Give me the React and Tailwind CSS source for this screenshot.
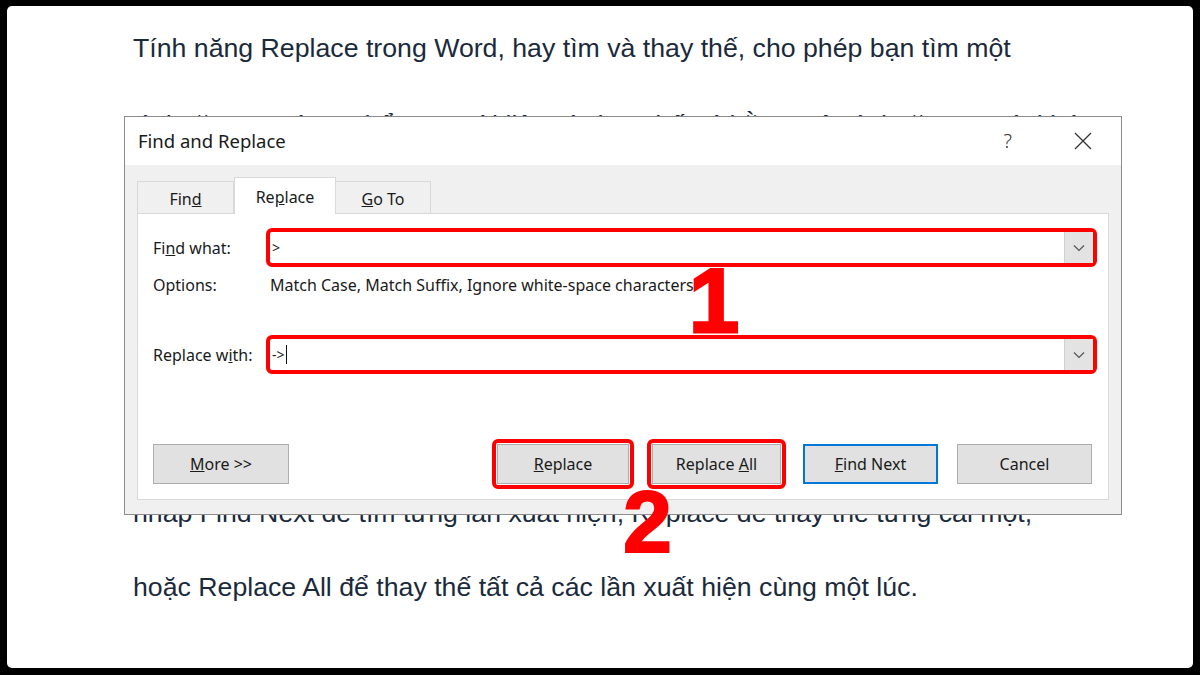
import React from "react";

function Chevron() {
  return (
    <svg width="12" height="8" viewBox="0 0 12 8" className="block">
      <polyline points="1,1.5 6,6.5 11,1.5" fill="none" stroke="#555" strokeWidth="1.2" />
    </svg>
  );
}

function Field({ value, cursor }) {
  return (
    <div className="h-[39px] border-4 border-[#ff0000] rounded-[6px] flex bg-white">
      <div className="flex-1 flex items-center pl-[2px] text-[14px] text-[#222]">
        <span>{value}</span>
        {cursor && <span className="inline-block w-px h-[19px] bg-[#111] ml-[1px]" />}
      </div>
      <div className="w-[29px] bg-[#e3e3e3] border-l border-[#d0d0d0] flex items-center justify-center">
        <Chevron />
      </div>
    </div>
  );
}

function Btn({ children, blue, w }) {
  return (
    <div
      className={
        "h-[40px] shrink-0 flex items-center justify-center bg-[#e1e1e1] text-[16px] text-[#1a1a1a] " +
        (blue ? "border-2 border-[#0078d7]" : "border border-[#adadad]")
      }
      style={{ width: w }}
    >
      {children}
    </div>
  );
}

function RedBtn({ children, w }) {
  return (
    <div className="shrink-0 border-4 border-[#ff0000] rounded-[6px] p-px">
      <div
        className="h-[40px] flex items-center justify-center bg-[#e1e1e1] border border-[#adadad]"
        style={{ width: w }}
      >
        {children}
      </div>
    </div>
  );
}

export default function App() {
  const body = { fontFamily: '"Liberation Sans", Arial, sans-serif' };
  const ui = { fontFamily: '"Noto Sans", "Open Sans", sans-serif' };
  return (
    <div className="w-[1200px] h-[675px] bg-black pt-[6px] px-[7px] pb-[7px]">
      <div className="relative w-full h-full bg-white rounded-[5px] overflow-hidden">
        <div className="pt-[5px] pl-[126px] leading-[74px] text-[26.7px] text-[#1b2a3b] whitespace-nowrap" style={body}>
          <div>Tính năng Replace trong Word, hay tìm và thay thế, cho phép bạn tìm một</div>
          <div className="mt-[3px]">từ hoặc cụm từ cụ thể trong tài liệu và thay thế nó bằng một từ hoặc cụm từ khác</div>
          <div className="mt-[314px]">nhấp Find Next để tìm từng lần xuất hiện, Replace để thay thế từng cái một,</div>
          <div>hoặc Replace All để thay thế tất cả các lần xuất hiện cùng một lúc.</div>
        </div>

        {/* Dialog */}
        <div
          className="absolute left-[117px] top-[110px] w-[998px] h-[399px] border border-[#8c8c8c] bg-[#f0f0f0] flex flex-col"
          style={ui}
        >
          <div className="h-[48px] bg-white flex items-center pl-[13px] pr-[29px] shrink-0">
            <span className="text-[18.5px] text-[#1a1a1a] flex-1">Find and Replace</span>
            <span className="text-[20px] text-[#333] mr-[62px] font-light">?</span>
            <svg width="18" height="18" viewBox="0 0 18 18">
              <path d="M1 1 L17 17 M17 1 L1 17" stroke="#333" strokeWidth="1.3" />
            </svg>
          </div>
          <div className="flex-1 px-[12px] pt-[12px] pb-[14px] flex flex-col">
            <div className="flex items-end h-[36px] text-[16px] text-[#1a1a1a]">
              <div className="w-[97px] h-[32px] pt-[2px] border border-b-0 border-[#d9d9d9] bg-[#f0f0f0] flex items-center justify-center">
                Fin<u>d</u>
              </div>
              <div className="w-[102px] h-[37px] -mb-px pt-[2px] border border-b-0 border-[#d9d9d9] bg-white flex items-center justify-center relative z-10">
                Re<u>p</u>lace
              </div>
              <div className="w-[95px] h-[32px] pt-[2px] border border-b-0 border-l-0 border-[#d9d9d9] bg-[#f0f0f0] flex items-center justify-center">
                <u>G</u>o To
              </div>
            </div>
            <div className="flex-1 bg-white border border-[#d9d9d9] pl-[15px] pr-[11px] pt-[14px] text-[16px] text-[#1a1a1a]">
              <div className="flex items-center">
                <div className="w-[113px]">Fi<u>n</u>d what:</div>
                <div className="flex-1">
                  <Field value=">" />
                </div>
              </div>
              <div className="flex items-center h-[36px]">
                <div className="w-[117px]">Options:</div>
                <div>Match Case, Match Suffix, Ignore white-space characters</div>
              </div>
              <div className="flex items-center mt-[32px]">
                <div className="w-[113px]">Replace w<u>i</u>th:</div>
                <div className="flex-1">
                  <Field value="->" cursor />
                </div>
              </div>
              <div className="flex items-center mt-[65px] mr-[5px]">
                <Btn w={136}>
                  <span>
                    <u>M</u>ore &gt;&gt;
                  </span>
                </Btn>
                <div className="ml-[203px]">
                  <RedBtn w={132}>
                    <span>
                      <u>R</u>eplace
                    </span>
                  </RedBtn>
                </div>
                <div className="ml-[13px]">
                  <RedBtn w={129}>
                    <span>
                      Replace <u>A</u>ll
                    </span>
                  </RedBtn>
                </div>
                <div className="ml-[17px]">
                  <Btn blue w={135}>
                    <span>
                      <u>F</u>ind Next
                    </span>
                  </Btn>
                </div>
                <div className="ml-[19px]">
                  <Btn w={135}>Cancel</Btn>
                </div>
              </div>
            </div>
          </div>
        </div>

        {/* Callout numbers */}
        <div
          className="absolute left-[682px] top-[250px] text-[90px] leading-none font-bold text-[#ff0000] [-webkit-text-stroke:3px_#ff0000]"
          style={body}
        >
          1
        </div>
        <div
          className="absolute left-[616px] top-[472px] text-[88px] leading-none font-bold text-[#ff0000] [-webkit-text-stroke:2px_#ff0000]"
          style={body}
        >
          2
        </div>
      </div>
    </div>
  );
}
